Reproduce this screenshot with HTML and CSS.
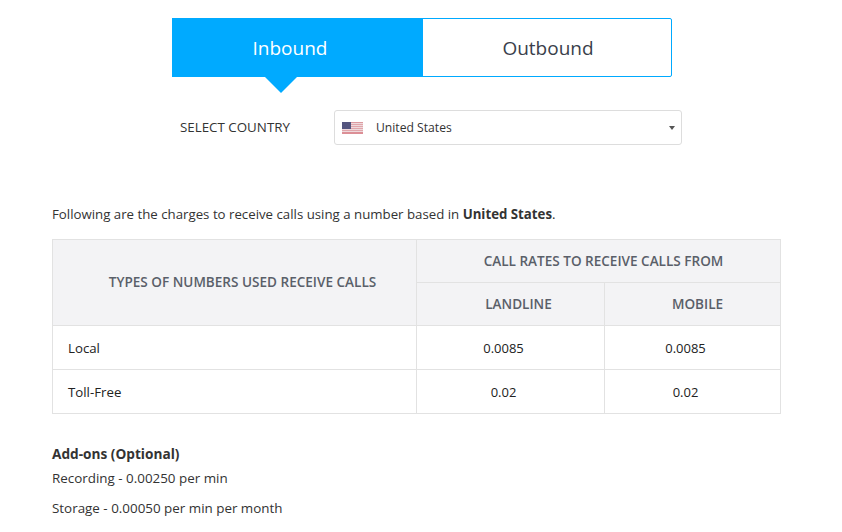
FILE: index.html
```html
<!DOCTYPE html>
<html lang="en">

<head>
    <meta charset="UTF-8">
    <meta name="viewport" content="width=device-width, initial-scale=1.0">
    <title>Call Rates</title>
    <link rel="stylesheet" href="styles.css">
</head>

<body>
    <div class="tabs">
        <div class="tab tab-active">Inbound</div>
        <div class="tab">Outbound</div>
    </div>

    <div class="country-row">
        <span class="country-label">SELECT COUNTRY</span>
        <div class="country-select">
            <svg class="flag" width="21" height="12" viewBox="0 0 21 12">
                <rect width="21" height="12" fill="#eed9dc" />
                <rect y="0" width="21" height="1" fill="#dc9aa0" />
                <rect y="2" width="21" height="1" fill="#e0a6ab" />
                <rect y="4" width="21" height="1" fill="#e0a6ab" />
                <rect y="6" width="21" height="1" fill="#e0a6ab" />
                <rect y="8" width="21" height="1" fill="#e0a6ab" />
                <rect y="10" width="21" height="2" fill="#dc8f96" />
                <rect width="9" height="7" fill="#54557f" />
            </svg>
            <span class="country-name">United States</span>
            <span class="caret"></span>
        </div>
    </div>

    <p class="intro">Following are the charges to receive calls using a number based in <b>United States</b>.</p>

    <table class="rates">
        <colgroup>
            <col class="col-type">
            <col class="col-landline">
            <col class="col-mobile">
        </colgroup>
        <thead>
            <tr>
                <th rowspan="2" class="th-type">TYPES OF NUMBERS USED RECEIVE CALLS</th>
                <th colspan="2" class="th-narrow">CALL RATES TO RECEIVE CALLS FROM</th>
            </tr>
            <tr>
                <th>LANDLINE</th>
                <th class="th-narrow">MOBILE</th>
            </tr>
        </thead>
        <tbody>
            <tr>
                <td>Local</td>
                <td class="rate">0.0085</td>
                <td class="rate">0.0085</td>
            </tr>
            <tr>
                <td>Toll-Free</td>
                <td class="rate">0.02</td>
                <td class="rate">0.02</td>
            </tr>
        </tbody>
    </table>

    <div class="addons">
        <h4>Add-ons (Optional)</h4>
        <p>Recording - 0.00250 per min</p>
        <p>Storage - 0.00050 per min per month</p>
    </div>
</body>

</html>
```

FILE: styles.css
```css
body {
    font-family: 'Open Sans', 'Noto Sans', sans-serif;
    font-size: 13px;
    margin: 0;
    padding: 18px 0 0 52px;
    background-color: #fff;
    color: #333;
}

.tabs {
    display: flex;
    width: 500px;
    height: 59px;
    margin-left: 120px;
    box-sizing: border-box;
    border: 1px solid #00aaff;
    border-radius: 2px;
}

.tab {
    flex: 1;
    display: flex;
    align-items: center;
    justify-content: center;
    padding: 1px 0 0 2px;
    font-size: 19px;
    color: #3a3f4b;
}

.tab-active {
    position: relative;
    flex: none;
    width: 236px;
    margin: -1px 0 -1px -1px;
    padding: 1px 15px 0 0;
    background-color: #00aaff;
    color: #fff;
}

.tab-active::after {
    content: "";
    position: absolute;
    top: 59px;
    left: 93px;
    border-top: 16px solid #00aaff;
    border-left: 16px solid transparent;
    border-right: 16px solid transparent;
}

.country-row {
    display: flex;
    align-items: center;
    margin: 33px 0 0 128px;
}

.country-label {
    width: 154px;
    padding-bottom: 2px;
    font-size: 13.35px;
    color: #333;
}

.country-select {
    display: flex;
    align-items: center;
    width: 348px;
    height: 35px;
    box-sizing: border-box;
    padding: 0 6px 0 7px;
    border: 1px solid #ddd;
    border-radius: 3px;
    font-size: 12.15px;
}

.flag {
    margin-right: 13px;
}

.country-name {
    flex: 1;
}

.caret {
    border-top: 4px solid #555;
    border-left: 3px solid transparent;
    border-right: 3px solid transparent;
}

.intro {
    margin: 60px 0 16px;
    line-height: 18px;
    font-size: 13.25px;
}

.rates {
    width: 729px;
    border-collapse: collapse;
    table-layout: fixed;
}

.col-type {
    width: 364px;
}

.col-landline {
    width: 188px;
}

.rates th,
.rates td {
    border: 1px solid #e2e2e2;
    padding: 0 15px;
}

.rates th {
    height: 42px;
    padding: 0 0 0 16px;
    background-color: #f3f3f5;
    font-size: 13.55px;
    font-weight: 600;
    color: #5a5f69;
}

.rates th.th-type {
    padding-bottom: 2px;
}

.rates th.th-narrow {
    padding-left: 10px;
}

.rates td {
    height: 43px;
    font-size: 13.25px;
    color: #222;
}

.rates td.rate {
    padding: 0 14px 0 0;
    font-size: 13px;
    text-align: center;
}

.addons {
    margin-top: 31px;
}

.addons h4 {
    margin: 0 0 6px;
    font-size: 13.65px;
    line-height: 18px;
    color: #333;
}

.addons p {
    margin: 0 0 12px;
    font-size: 13.4px;
    line-height: 18px;
}
```
